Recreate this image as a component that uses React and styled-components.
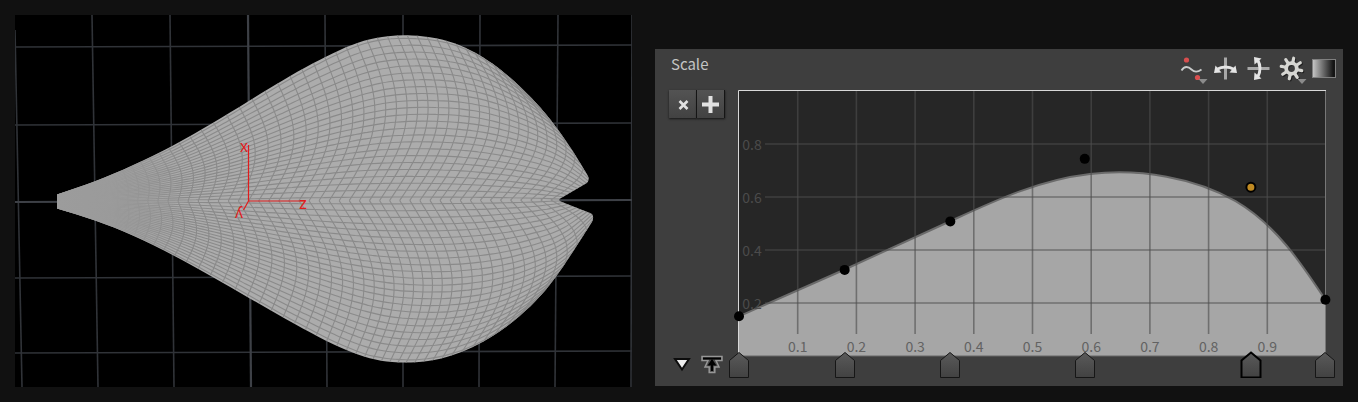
import React from "react";
import styled, { createGlobalStyle } from "styled-components";

const GlobalStyle = createGlobalStyle`
  * { box-sizing: border-box; }
  body {
    margin: 0;
    background: #111;
    font-family: "Noto Sans CJK JP", "Noto Sans", sans-serif;
  }
`;

const Page = styled.main`
  display: grid;
  grid-template-columns: minmax(0, 617fr) minmax(0, 688fr);
  gap: 23px;
  align-items: start;
  padding: 15px;
`;

const Viewport = styled.svg`
  display: block;
  width: 100%;
  height: auto;
  background: #000;
`;

const AxisLetter = styled.text`
  fill: #e01c1c;
  font-family: "Liberation Sans", sans-serif;
  font-size: 16px;
  text-anchor: middle;
  dominant-baseline: central;
`;

const Panel = styled.section`
  margin-top: 34px;
  background: #3e3e3e;
`;

const PanelHeader = styled.header`
  display: flex;
  align-items: flex-start;
  justify-content: space-between;
  height: 41px;
  padding: 3px 2px 0 16px;
`;

const Title = styled.h2`
  margin: 0;
  color: #c4c4c4;
  font-size: 15px;
  font-weight: 400;
  line-height: 24px;
`;

const Toolbar = styled.div`
  display: flex;
`;

const ToolButton = styled.button`
  width: 33px;
  height: 33px;
  padding: 0;
  border: 0;
  background: none;
  svg { display: block; overflow: visible; }
`;

const PanelBody = styled.div`
  display: grid;
  grid-template-columns: 69px minmax(0, 1fr);
  padding: 0 17px 0 14px;
`;

const Side = styled.div`
  display: flex;
  flex-direction: column;
  justify-content: space-between;
`;

const KeyButtons = styled.div`
  display: flex;
`;

const KeyButton = styled.button`
  width: 28px;
  height: 28px;
  padding: 0;
  border: 0;
  border-right: 1px solid #151515;
  background: linear-gradient(#535353, #424242);
  box-shadow: 0 1px 2px #161616;
  svg { display: block; }
`;

const SideTools = styled.div`
  display: flex;
  align-items: center;
  gap: 4px;
  height: 44px;
`;

const SmallButton = styled.button`
  width: 26px;
  height: 26px;
  padding: 0;
  border: 0;
  background: none;
  svg { display: block; }
`;

const RampArea = styled.div`
  padding-bottom: 30px;
  position: relative;
`;

const Ramp = styled.svg`
  display: block;
  width: 100%;
  height: auto;
  overflow: visible;
`;

const Tick = styled.text`
  fill: ${(p) => (p.$side ? "#4b4b4b" : "#626262")};
  font-size: 14px;
  text-anchor: middle;
`;

const HandleTrack = styled.div`
  position: absolute;
  right: 0;
  bottom: 8px;
  left: 1px;
  height: 27px;
`;

const Handle = styled.button`
  position: absolute;
  left: ${(p) => p.$at * 100}%;
  width: 22px;
  height: 27px;
  margin-left: -11px;
  padding: 0;
  border: 0;
  background: none;
  svg { display: block; }
  path {
    stroke: ${(p) => (p.$active ? "#000" : "#161616")};
    stroke-width: ${(p) => (p.$active ? 2 : 1)};
  }
`;

/* ---- curve helpers ---- */

const f = (n) => n.toFixed(1);

// Smooth path through the given points.
function smooth(pts) {
  let d = `M${f(pts[0][0])} ${f(pts[0][1])}`;
  for (let i = 0; i < pts.length - 1; i++) {
    const a = pts[Math.max(0, i - 1)];
    const b = pts[i];
    const c = pts[i + 1];
    const e = pts[Math.min(pts.length - 1, i + 2)];
    d += `C${f(b[0] + (c[0] - a[0]) / 6)} ${f(b[1] + (c[1] - a[1]) / 6)} ${f(c[0] - (e[0] - b[0]) / 6)} ${f(c[1] - (e[1] - b[1]) / 6)} ${f(c[0])} ${f(c[1])}`;
  }
  return d;
}

// Uniform cubic B-spline that starts and ends on its first and last points.
function bspline(pts) {
  const n = pts.length;
  const mirror = (p, q) => [2 * p[0] - q[0], 2 * p[1] - q[1]];
  const all = [mirror(pts[0], pts[1]), ...pts, mirror(pts[n - 1], pts[n - 2])];
  const mix = (p, q, t) => [p[0] + (q[0] - p[0]) * t, p[1] + (q[1] - p[1]) * t];
  let d = `M${f(pts[0][0])} ${f(pts[0][1])}`;
  for (let i = 1; i < n; i++) {
    const b = all[i];
    const c = all[i + 1];
    const e = all[i + 2];
    const p1 = mix(b, c, 1 / 3);
    const p2 = mix(b, c, 2 / 3);
    const p3 = mix(p2, mix(c, e, 1 / 3), 0.5);
    d += "C" + [p1, p2, p3].map((p) => `${f(p[0])} ${f(p[1])}`).join(" ");
  }
  return d;
}

// Cubic interpolation in a table of [x, value].
function lookup(table, x) {
  const n = table.length;
  let i = 0;
  while (i < n - 2 && x > table[i + 1][0]) i++;
  const [x0, y0] = table[i];
  const [x1, y1] = table[i + 1];
  const slope = (k) => {
    const a = table[Math.max(0, k - 1)];
    const b = table[Math.min(n - 1, k + 1)];
    return (b[1] - a[1]) / (b[0] - a[0]);
  };
  const h = x1 - x0;
  const t = (x - x0) / h;
  const t2 = t * t;
  const t3 = t2 * t;
  return (
    (2 * t3 - 3 * t2 + 1) * y0 +
    (t3 - 2 * t2 + t) * h * slope(i) +
    (3 * t2 - 2 * t3) * y1 +
    (t3 - t2) * h * slope(i + 1)
  );
}

/* ---- leaf geometry ---- */

const UPPER = [
  [57, 194.5], [95, 182], [133, 165.5], [173, 146], [213, 123], [248, 101.5],
  [283, 80], [313, 63], [340, 49.5], [364, 40], [388, 35.5], [412, 35],
  [436, 37.5], [460, 44.5], [482, 56], [503, 71], [523, 89], [541, 108],
  [558, 129], [573, 151], [588, 176],
];
const LOWER = [
  [57, 208.5], [95, 220], [133, 235], [173, 255], [213, 277], [250, 298.5],
  [286, 319.5], [320, 338], [346, 350.5], [370, 359], [392, 362.5], [416, 363],
  [440, 359.5], [466, 351], [490, 338.5], [514, 321.5], [536, 301.5],
  [556, 277.5], [574, 250], [592, 222],
];

const OUTLINE =
  bspline(UPPER) +
  "Q590 181 586 183.500L562 197.500Q556 200 562 202L590 213Q595 215 592 222" +
  bspline([...LOWER].reverse()).replace("M", "L") +
  "Z";

const EDGE_SHIFT = {
  up: [[57, 0], [110, -3], [170, -9], [208, -7], [235, 0], [283, 12], [330, 17], [406, 17], [460, 14], [520, 8], [561, 14]],
  down: [[57, 0], [110, -2], [170, -4], [208, 2], [235, 8], [283, 16], [330, 17], [380, 10], [406, 5], [460, 1], [520, 8], [561, 22]],
};
const BOW = [[57, 0], [120, 2], [160, 6], [208, 12], [283, 22], [406, 30], [520, 32], [561, 24]];

const ROWS = 24;
const COLS = 50;

function meshPoint(half, u, v) {
  const mx = 57 + 504 * u;
  const my = 201.5 - 1.5 * u;
  const ex = mx + lookup(EDGE_SHIFT[half], mx);
  const ey = lookup(half === "up" ? UPPER : LOWER, ex);
  const bow = lookup(BOW, mx) * Math.sin(Math.PI * v);
  return [mx + (ex - mx) * v + bow, my + (ey - my) * v];
}

const MESH = ["up", "down"].flatMap((half) => {
  const lines = [];
  for (let c = 1; c <= COLS; c++) {
    lines.push(smooth(Array.from({ length: 13 }, (_, k) => meshPoint(half, c / COLS, k / 12))));
  }
  for (let r = 0; r < ROWS; r++) {
    lines.push(smooth(Array.from({ length: 41 }, (_, k) => meshPoint(half, k / 40, (r + 0.5) / ROWS))));
  }
  return lines;
});

const GRID_LINES = [
  [15, 30, 22, 387], [92, 15, 98, 387], [170, 15, 174, 387], [325, 15, 327, 387],
  [403, 15, 403, 387], [480, 15, 479, 387], [558, 15, 555, 387], [632, 15, 631, 387],
  [15, 47, 632, 45], [15, 125, 632, 123], [15, 278, 632, 276], [15, 353, 632, 351],
];
const MAIN_LINES = [[248, 15, 251, 387], [15, 202, 632, 200]];

function LeafView() {
  return (
    <Viewport viewBox="15 15 617 372" role="img" aria-label="Leaf mesh">
      <defs>
        <clipPath id="leaf"><path d={OUTLINE} /></clipPath>
        <linearGradient id="haze">
          <stop offset="0" stopColor="#9c9c9c" />
          <stop offset=".4" stopColor="#9c9c9c" stopOpacity=".9" />
          <stop offset="1" stopColor="#a0a0a0" stopOpacity="0" />
        </linearGradient>
      </defs>
      <g stroke="#303338" strokeWidth="1.6">
        {GRID_LINES.map(([a, b, c, d], i) => <line key={i} x1={a} y1={b} x2={c} y2={d} />)}
      </g>
      <g stroke="#3d4046" strokeWidth="2.2">
        {MAIN_LINES.map(([a, b, c, d], i) => <line key={i} x1={a} y1={b} x2={c} y2={d} />)}
      </g>
      <path d={OUTLINE} fill="#acacac" />
      <g clipPath="url(#leaf)">
        <g fill="none" stroke="#8a8a8a" strokeWidth="1.1">
          {MESH.map((d, i) => <path key={i} d={d} />)}
        </g>
        <rect x="57" y="150" width="130" height="100" fill="url(#haze)" />
      </g>
      <path d="M248.500 145V201H304M248.500 201L243.500 210" fill="none" stroke="#e01c1c" strokeWidth="1.2" />
      <AxisLetter x="244" y="146">x</AxisLetter>
      <AxisLetter x="303" y="203">z</AxisLetter>
      <AxisLetter transform="translate(239 214) rotate(180)">y</AxisLetter>
    </Viewport>
  );
}

/* ---- ramp ---- */

const W = 587;
const H = 265;
const KEYS = [
  { at: 0, value: 0.15 }, { at: 0.18, value: 0.325 }, { at: 0.36, value: 0.508 },
  { at: 0.589, value: 0.744 }, { at: 0.872, value: 0.637, active: true }, { at: 0.999, value: 0.212 },
];
const CURVE = bspline(KEYS.map((k) => [k.at * W, H - k.value * H]));
const TENTHS = [1, 2, 3, 4, 5, 6, 7, 8, 9];
const FIFTHS = [0.2, 0.4, 0.6, 0.8];

function RampChart() {
  return (
    <Ramp viewBox="-1 -1 588 266" role="img" aria-label="Scale ramp">
      <rect x="0" y="0" width={W} height={H} fill="#262626" />
      <path d={`${CURVE}L586 265H0Z`} fill="#a6a6a6" />
      <path d={CURVE} fill="none" stroke="#6b6b6b" strokeWidth="2" />
      <g stroke="#4d4d4d" strokeOpacity=".62">
        {TENTHS.map((t) => <line key={t} x1={t * W / 10} x2={t * W / 10} y1="0" y2="243" strokeWidth="1.6" />)}
        {FIFTHS.map((t) => <line key={t} x1="26" x2={W} y1={H - t * H} y2={H - t * H} strokeWidth="1.6" />)}
      </g>
      <path d="M586.500 0V265" stroke="#777" />
      <path d="M0 265H587" stroke="#666" />
      <path d="M-.5 265V-.5H587" fill="none" stroke="#d8d8d8" />
      {TENTHS.map((t) => <Tick key={t} x={t * W / 10} y="261">{`0.${t}`}</Tick>)}
      {FIFTHS.map((t) => <Tick key={t} $side x="13" y={H - t * H + 6}>{t}</Tick>)}
      {KEYS.map((k) => (
        <circle key={k.at} cx={k.at * W} cy={H - k.value * H} r={k.active ? 4.500 : 5}
          fill={k.active ? "#c08a22" : "#000"} stroke="#000" strokeWidth={k.active ? 2 : 0} />
      ))}
    </Ramp>
  );
}

/* ---- icons, each drawn around the centre of its button ---- */

const Icon = ({ size = 33, children }) => (
  <svg width={size} height={size} viewBox={`${-size / 2} ${-size / 2} ${size} ${size}`} aria-hidden="true">
    {children}
  </svg>
);

const MenuMark = () => <path d="M6 10.500H15L10.500 15.500Z" fill="#8b8b8b" />;

const CurveIcon = () => (
  <Icon>
    <path d="M-11 2C-8-3-4-2-1 1S5 4 9 1" fill="none" stroke="#c9cbcb" strokeWidth="1.800" />
    <circle cx="-6" cy="-8.500" r="2.600" fill="#d94f4f" />
    <circle cx="5" cy="9" r="2.600" fill="#d94f4f" />
    <MenuMark />
  </Icon>
);

const SwingShape = () => (
  <>
    <path d="M0-11V11" stroke="#a8a8a8" strokeWidth="3" />
    <path d="M-9 1Q0-4 9 1" fill="none" stroke="#e4e4e4" strokeWidth="3" />
    <path d="M-11.500 4.500L-10-3L-4 4ZM11.500 4.500L10-3L4 4Z" fill="#e4e4e4" />
  </>
);

const TEETH = [0, 45, 90, 135, 180, 225, 270, 315];

const GearIcon = () => (
  <Icon>
    {[["#202020", 1], ["#d6d6d2", 0]].map(([color, off]) => (
      <g key={color} fill={color} transform={`translate(${off} ${off})`}>
        {TEETH.map((a) => (
          <path key={a} d="M0-6V-10.500" stroke={color} strokeWidth="3.200" strokeLinecap="round" transform={`rotate(${a + 12})`} />
        ))}
        <circle r="5.300" fill="none" stroke={color} strokeWidth="3.800" />
      </g>
    ))}
    <MenuMark />
  </Icon>
);

const GradientIcon = () => (
  <Icon>
    <defs>
      <linearGradient id="swatch">
        <stop offset="0" stopColor="#c8c8c8" />
        <stop offset=".9" stopColor="#141414" />
      </linearGradient>
    </defs>
    <rect x="-12" y="-9" width="23" height="18" fill="url(#swatch)" stroke="#808080" />
  </Icon>
);

const TOOLS = [
  ["Curve presets", <CurveIcon key="c" />],
  ["Flip horizontally", <Icon key="h"><SwingShape /></Icon>],
  ["Flip vertically", <Icon key="v"><g transform="rotate(90)"><SwingShape /></g></Icon>],
  ["Settings", <GearIcon key="g" />],
  ["Show as colour ramp", <GradientIcon key="r" />],
];

export default function App() {
  return (
    <>
      <GlobalStyle />
      <Page>
        <LeafView />
        <Panel>
          <PanelHeader>
            <Title>Scale</Title>
            <Toolbar>
              {TOOLS.map(([label, icon]) => <ToolButton key={label} aria-label={label}>{icon}</ToolButton>)}
            </Toolbar>
          </PanelHeader>
          <PanelBody>
            <Side>
              <KeyButtons>
                <KeyButton aria-label="Remove key">
                  <Icon size={27}>
                    <path d="M-3-3.500L5 4.500M5-3.500L-3 4.500" stroke="#e0e0e0" strokeWidth="2.600" />
                  </Icon>
                </KeyButton>
                <KeyButton aria-label="Add key">
                  <Icon size={27}>
                    <path d="M0-8.500V8.500M-8.500 0H8.500" stroke="#e2e2e2" strokeWidth="4" />
                  </Icon>
                </KeyButton>
              </KeyButtons>
              <SideTools>
                <SmallButton aria-label="Collapse">
                  <Icon size={26}>
                    <path d="M-7-5H7L0 5.500Z" fill="#ececec" stroke="#0c0c0c" strokeWidth="2" />
                  </Icon>
                </SmallButton>
                <SmallButton aria-label="Raise to top">
                  <Icon size={26}>
                    <path d="M-10-7.500H10V-3.500H4L7 3H2.800V8.500H-2.800V3H-7L-4-3.500H-10Z" fill="#4a4a4a" stroke="#979797" strokeWidth="1.500" />
                    <path d="M-9-5.500H9" stroke="#000" strokeWidth="2" />
                    <path d="M0-4V7" stroke="#000" strokeWidth="2" />
                    <path d="M0-5L4.500 1.500H-4.500Z" fill="#000" />
                  </Icon>
                </SmallButton>
              </SideTools>
            </Side>
            <RampArea>
              <RampChart />
              <HandleTrack>
                {KEYS.map((k) => (
                  <Handle key={k.at} $at={k.at} $active={k.active} aria-label={`Key at ${k.at}`}>
                    <svg width="22" height="27" viewBox="0 0 22 27" aria-hidden="true">
                      <defs>
                        <linearGradient id="grip" x2="0" y2="1">
                          <stop offset="0" stopColor="#5a5a5a" />
                          <stop offset="1" stopColor="#424242" />
                        </linearGradient>
                      </defs>
                      <path d="M11 1.500L20.500 9.500V26.500H1.500V9.500Z" fill="url(#grip)" />
                    </svg>
                  </Handle>
                ))}
              </HandleTrack>
            </RampArea>
          </PanelBody>
        </Panel>
      </Page>
    </>
  );
}
